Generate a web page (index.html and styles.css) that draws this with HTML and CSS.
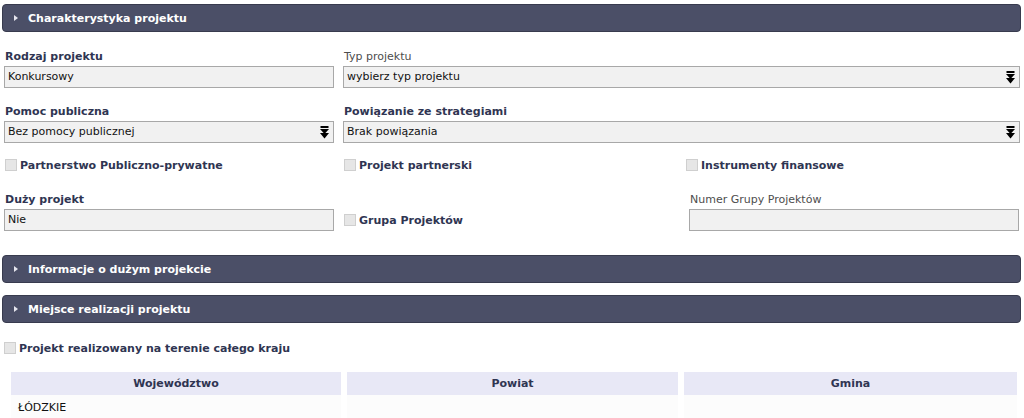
FILE: index.html
```html
<!DOCTYPE html>
<html lang="pl">
<head>
<meta charset="utf-8">
<link rel="stylesheet" href="styles.css">
</head>
<body>
<div class="page">
  <div class="bar"><span class="tri"></span>Charakterystyka projektu</div>

  <div class="grid">
    <div class="field r1">
      <div class="lbl">Rodzaj projektu</div>
      <div class="inp">Konkursowy</div>
    </div>
    <div class="field span2 r1">
      <div class="lbl light">Typ projektu</div>
      <div class="inp sel">wybierz typ projektu<svg class="arr" width="9" height="13" viewBox="0 0 9 13"><rect x="0.5" y="0" width="8" height="2" fill="#000"/><path d="M0 3 H9 L4.5 8 Z" fill="#000"/><path d="M0 7 H9 L4.5 12.5 Z" fill="#000"/></svg></div>
    </div>

    <div class="field r2">
      <div class="lbl">Pomoc publiczna</div>
      <div class="inp sel">Bez pomocy publicznej<svg class="arr" width="9" height="13" viewBox="0 0 9 13"><rect x="0.5" y="0" width="8" height="2" fill="#000"/><path d="M0 3 H9 L4.5 8 Z" fill="#000"/><path d="M0 7 H9 L4.5 12.5 Z" fill="#000"/></svg></div>
    </div>
    <div class="field span2 r2">
      <div class="lbl">Powiązanie ze strategiami</div>
      <div class="inp sel">Brak powiązania<svg class="arr" width="9" height="13" viewBox="0 0 9 13"><rect x="0.5" y="0" width="8" height="2" fill="#000"/><path d="M0 3 H9 L4.5 8 Z" fill="#000"/><path d="M0 7 H9 L4.5 12.5 Z" fill="#000"/></svg></div>
    </div>

    <div class="chk r3"><span class="box"></span>Partnerstwo Publiczno-prywatne</div>
    <div class="chk r3"><span class="box"></span>Projekt partnerski</div>
    <div class="chk r3 c3"><span class="box"></span>Instrumenty finansowe</div>

    <div class="field">
      <div class="lbl">Duży projekt</div>
      <div class="inp">Nie</div>
    </div>
    <div class="chk low"><span class="box"></span>Grupa Projektów</div>
    <div class="field c3in">
      <div class="lbl light">Numer Grupy Projektów</div>
      <div class="inp"></div>
    </div>
  </div>

  <div class="bar b2"><span class="tri"></span>Informacje o dużym projekcie</div>
  <div class="bar b3"><span class="tri"></span>Miejsce realizacji projektu</div>

  <div class="chk whole"><span class="box"></span>Projekt realizowany na terenie całego kraju</div>

  <div class="table">
    <div class="th">Województwo</div>
    <div class="th">Powiat</div>
    <div class="th">Gmina</div>
    <div class="td">ŁÓDZKIE</div>
    <div class="td"></div>
    <div class="td"></div>
  </div>
</div>
</body>
</html>
```
FILE: styles.css
```css
html, body {
  margin: 0;
  padding: 0;
  background: #ffffff;
}
body {
  font-family: "DejaVu Sans", Verdana, sans-serif;
  font-size: 11px;
  color: #111;
}
.page {
  padding: 4px 3px 0 2px;
}
.bar {
  height: 28px;
  box-sizing: border-box;
  background: #4b4f67;
  border: 1px solid #383b4e;
  border-radius: 4px;
  color: #fff;
  font-weight: bold;
  font-size: 11px;
  display: flex;
  align-items: center;
  padding-left: 11px;
}
.tri {
  width: 0;
  height: 0;
  border-left: 4px solid #e6e6ee;
  border-top: 3px solid transparent;
  border-bottom: 3px solid transparent;
  margin-right: 10px;
}
.grid {
  display: grid;
  grid-template-columns: 339px 344px 333px;
  padding-left: 2px;
  margin-top: 15px;
}
.span2 { grid-column: span 2; }
.field {
  display: flex;
  flex-direction: column;
}
.r1 { margin-bottom: 14px; }
.r2 { margin-bottom: 12px; }
.r3 { margin-bottom: 15px; }
.lbl {
  font-weight: bold;
  color: #2f3552;
  height: 16px;
  line-height: 16px;
  padding-top: 2px;
  margin-bottom: 1px;
  padding-left: 1px;
}
.lbl.light {
  font-weight: normal;
  color: #4d4d4d;
}
.inp {
  height: 22px;
  box-sizing: border-box;
  background: #f1f1f1;
  border: 1px solid #a8a8a8;
  line-height: 20px;
  padding-left: 3px;
  color: #111;
  display: flex;
  align-items: center;
}
.field .inp { width: 330px; }
.field.span2 .inp { width: 677px; }
.sel { justify-content: space-between; padding-right: 4px; }
.arr { display: block; }
.chk {
  display: flex;
  align-items: center;
  font-weight: bold;
  color: #2f3552;
  height: 20px;
}
.box {
  width: 10px;
  height: 10px;
  background: #e6e6e6;
  border: 1px solid #cfcfcf;
  margin-left: 1px;
  margin-right: 3px;
}
.c3 { margin-left: -2px; }
.low { align-self: end; height: 22px; }
.c3in { padding-left: 2px; }
.b2 { margin-top: 24px; }
.b3 { margin-top: 12px; }
.whole {
  margin-top: 15px;
  padding-left: 1px;
}
.table {
  display: grid;
  grid-template-columns: 330px 331px 333px;
  column-gap: 6px;
  padding-left: 9px;
  margin-top: 14px;
}
.th {
  background: #e8e8f6;
  height: 23px;
  line-height: 23px;
  text-align: center;
  font-weight: bold;
  color: #2f3552;
}
.td {
  height: 26px;
  line-height: 26px;
  padding-left: 7px;
  background: #fcfcfc;
}
```
